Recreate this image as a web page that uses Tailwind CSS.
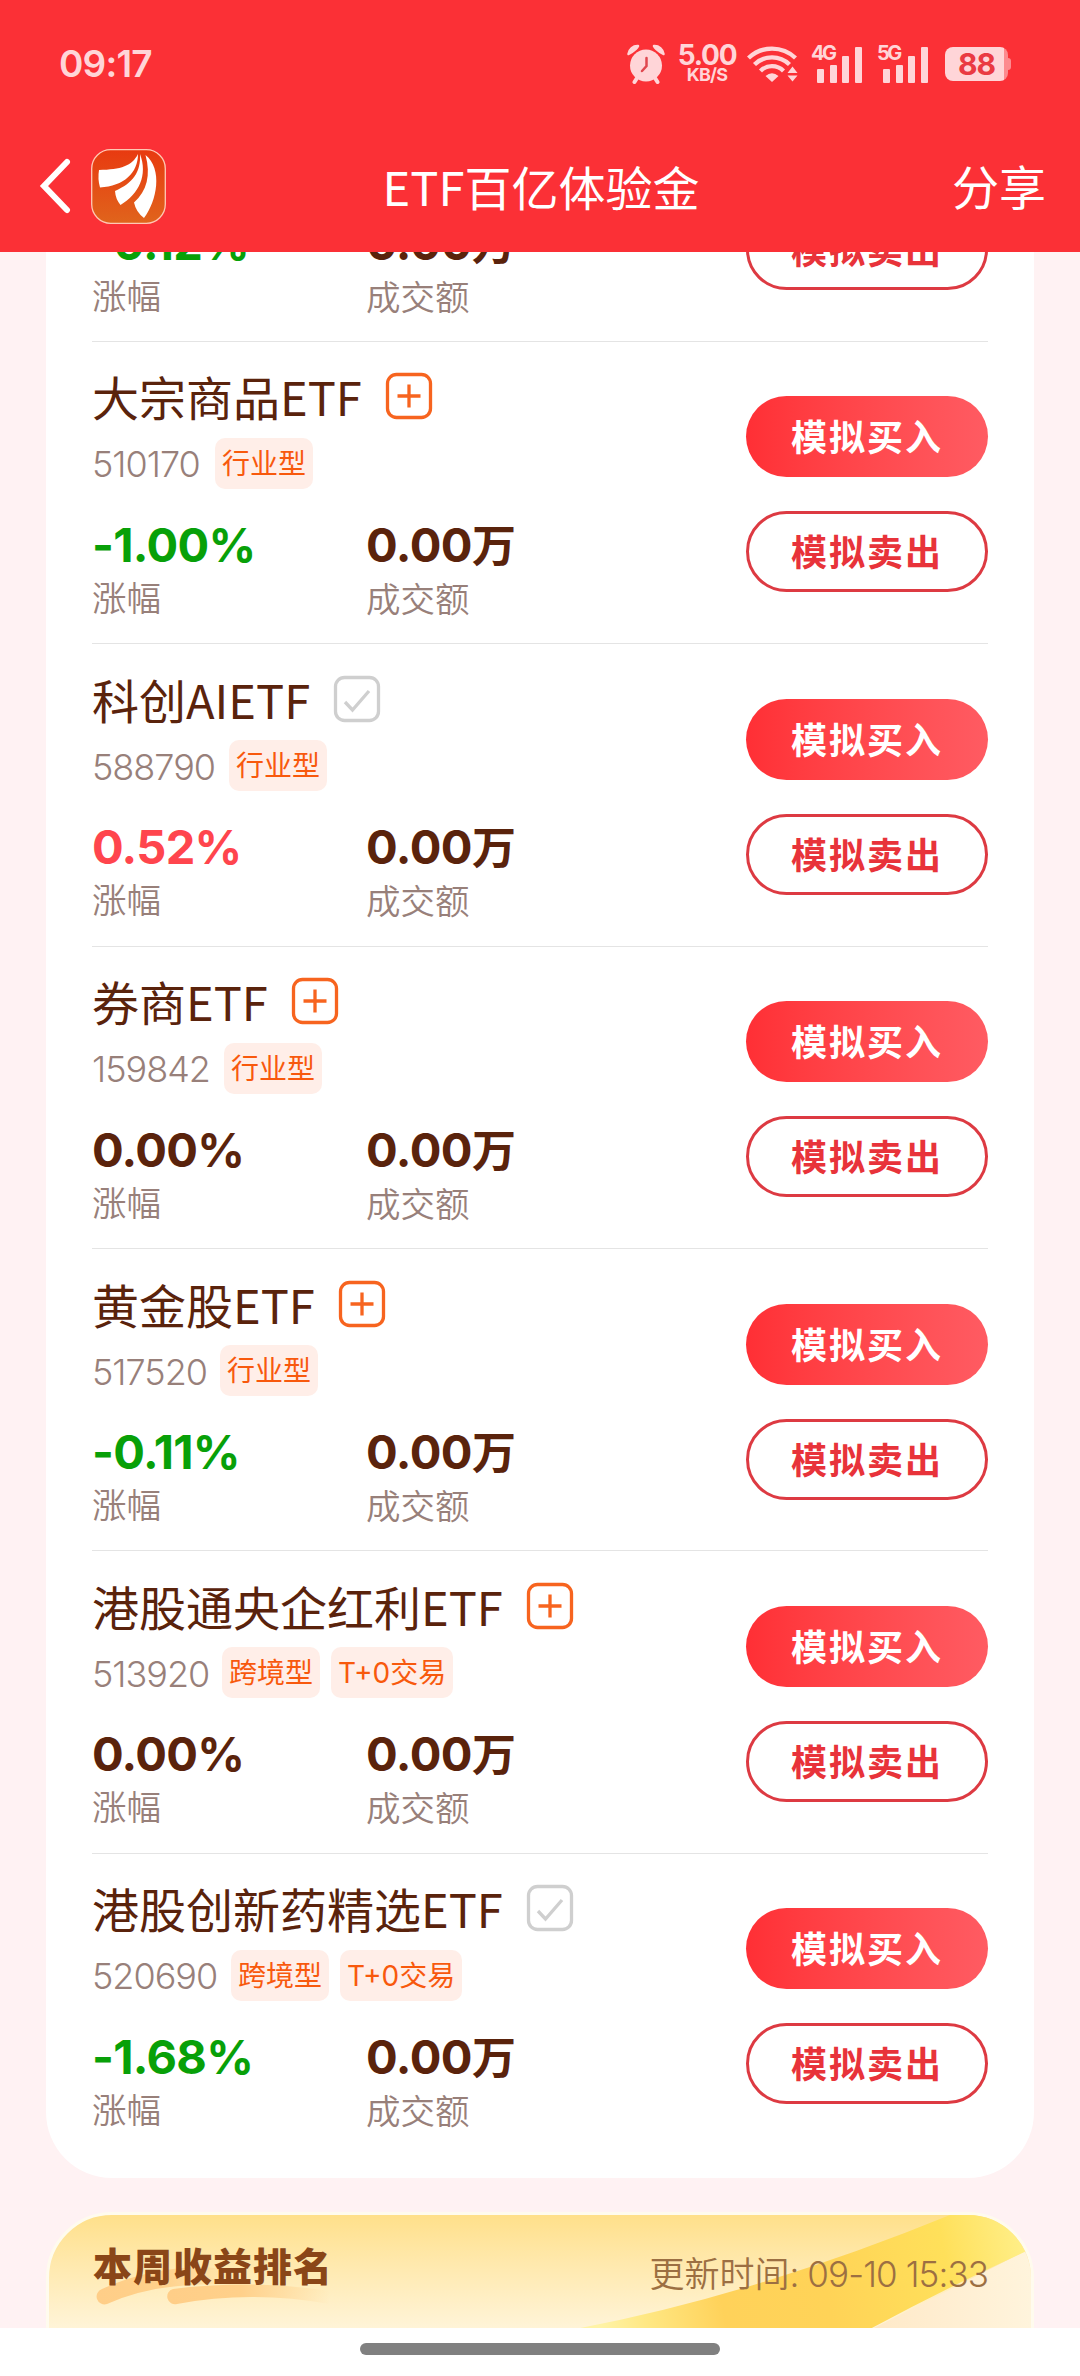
<!DOCTYPE html>
<html lang="zh-CN">
  <head>
    <meta charset="utf-8" />
    <meta name="viewport" content="width=device-width, initial-scale=1.0" />
    <script src="https://cdn.jsdelivr.net/npm/@tailwindcss/browser@4"></script>
    <title>ETF百亿体验金</title>
  </head>
  <body
    class="w-[1080px] h-[2376px] overflow-hidden bg-white font-['Inter','Noto_Sans_CJK_SC',sans-serif]"
  >
    <header class="h-[252px] bg-[#fb3036] text-white">
      <!-- status bar -->
      <div
        class="h-[128px] flex items-center justify-between pl-[59px] pr-[69px] text-[#ffd5d8]"
      >
        <span class="text-[37px] font-semibold tracking-[-0.8px]">09:17</span>
        <div class="flex items-center">
          <svg class="w-[38px] h-[40px]" viewBox="0 0 38 40">
            <g stroke="#ffd5d8" stroke-width="4" stroke-linecap="round">
              <path d="M10 34L7.500 38M28 34L30.500 38" />
            </g>
            <path
              d="M1.500 10A9 9 0 0 1 11 2Q10 5 1.500 10ZM36.500 10A9 9 0 0 0 27 2Q28 5 36.500 10Z"
              fill="#ffd5d8"
              stroke="#ffd5d8"
              stroke-width="2.500"
              stroke-linejoin="round"
            />
            <circle cx="19" cy="21.500" r="16" fill="#ffd5d8" />
            <path
              d="M19.500 14V22L15 27"
              fill="none"
              stroke="#e0474f"
              stroke-width="2.500"
              stroke-linecap="round"
            />
          </svg>
          <div class="ml-[12px] w-[60px] flex flex-col items-center font-bold">
            <span class="text-[28px] leading-[20px] tracking-[-1.2px]">5.00</span>
            <span class="mt-[2px] text-[18px] leading-[16px] tracking-[-0.8px]">KB/S</span>
          </div>
          <svg class="ml-[10px] w-[52px] h-[38px]" viewBox="0 0 52 38">
            <g fill="none" stroke="#ffd5d8" stroke-width="4.300">
              <path d="M1.500 13A34 34 0 0 1 48.500 13" />
              <path d="M7.500 19.500A25 25 0 0 1 42.500 19.500" />
              <path d="M13.500 26A16 16 0 0 1 36.500 26" />
            </g>
            <path
              d="M25 37L18.500 31Q25 25.500 31.500 31ZM40.500 28L45.500 21.500L50.500 28ZM40.500 30.500L45.500 36.500L50.500 30.500Z"
              fill="#ffd5d8"
            />
          </svg>
          <div class="relative ml-[18px] w-[46px] h-[38px] flex items-end gap-[5.500px]">
            <span class="absolute left-[-6px] top-[-1px] text-[20px] leading-[19px] font-bold tracking-[-2.5px]">4G</span>
            <i class="w-[7px] h-[14px] rounded-[1px] bg-[#ffd5d8]"></i>
            <i class="w-[7px] h-[18px] rounded-[1px] bg-[#ffd5d8]"></i>
            <i class="w-[7px] h-[27px] rounded-[1px] bg-[#ffd5d8]"></i>
            <i class="w-[7px] h-[36px] rounded-[1px] bg-[#ffd5d8]"></i>
          </div>
          <div class="relative ml-[20px] w-[46px] h-[38px] flex items-end gap-[5.500px]">
            <span class="absolute left-[-6px] top-[-1px] text-[20px] leading-[19px] font-bold tracking-[-2.5px]">5G</span>
            <i class="w-[7px] h-[14px] rounded-[1px] bg-[#ffd5d8]"></i>
            <i class="w-[7px] h-[18px] rounded-[1px] bg-[#ffd5d8]"></i>
            <i class="w-[7px] h-[27px] rounded-[1px] bg-[#ffd5d8]"></i>
            <i class="w-[7px] h-[36px] rounded-[1px] bg-[#ffd5d8]"></i>
          </div>
          <div
            class="ml-[16px] w-[63px] h-[34px] rounded-[8px] flex items-center justify-center bg-linear-to-r from-[#ffd5d8] from-94% to-[#fd8a8f] to-94% text-[30px] font-bold tracking-[-1px] text-[#ea3a42]"
          >
            88
          </div>
          <i class="w-[3px] h-[12px] rounded-r-[3px] bg-[#fd8a8f]"></i>
        </div>
      </div>
      <!-- nav bar -->
      <nav class="h-[116px] flex items-center pl-[38px] pr-[34px]">
        <svg class="w-[34px] h-[56px]" viewBox="0 0 34 56">
          <path
            d="M29 4L6 28L29 52"
            fill="none"
            stroke="#fff"
            stroke-width="6"
            stroke-linecap="round"
          />
        </svg>
        <svg class="ml-[19px] w-[75px] h-[75px]" viewBox="0 0 75 75">
          <defs>
            <linearGradient id="logo" x2="0" y2="1">
              <stop stop-color="#e83a10" />
              <stop offset="1" stop-color="#e0641c" />
            </linearGradient>
          </defs>
          <rect x=".7" y=".7" width="73.600" height="73.600" rx="19" fill="url(#logo)" stroke="#ffc9b4" stroke-width="1.300" />
          <path
            d="M47 5C41 17 30 20.500 8 21Q6.500 30 9 38.500C33 37 47 24 47 5Z
               M49 5C50 23 42 34 24 42Q24.500 50 29.500 56C48 45 57 26 49 5Z
               M54.500 6C60 26 56 42 43 53.500Q45 63 53 69C66 52 72 20 54.500 6Z"
            fill="#fff"
          />
        </svg>
        <h1 class="grow pr-[36px] text-center text-[47px] leading-[60px] font-normal font-['Noto_Sans_CJK_SC']">ETF百亿体验金</h1>
        <span class="pt-[3px] text-[47px] leading-[60px]">分享</span>
      </nav>
    </header>

    <main class="h-[2076px] overflow-hidden bg-[#fff2f3] px-[46px]">
      <section
        id="funds"
        class="-mt-[212.500px] h-[2138px] rounded-b-[66px] bg-white px-[46px]"
      ></section>

      <section
        class="relative mt-[34.500px] h-[300px] rounded-t-[66px] overflow-hidden border-[3px] border-[#fffbee] bg-linear-to-b from-[#ffe08a] to-[#fff5dc] to-[120px]"
      >
        <svg class="absolute left-0 top-0 w-[982px] h-[114px]" viewBox="49 2215 982 114">
          <defs>
            <!-- runs across the band, from its upper edge to its lower one -->
            <linearGradient id="beam" gradientUnits="userSpaceOnUse" x1="600" y1="2320" x2="1030" y2="2235">
              <stop stop-color="#fff3a6" />
              <stop offset=".1" stop-color="#ffe884" />
              <stop offset=".28" stop-color="#ffd25a" />
              <stop offset=".52" stop-color="#ffd357" />
              <stop offset=".8" stop-color="#ffe05a" />
              <stop offset="1" stop-color="#fff08c" />
            </linearGradient>
            <linearGradient id="corner" x2="1" y2="0">
              <stop stop-color="#ffe9c8" />
              <stop offset="1" stop-color="#fff4dc" />
            </linearGradient>
            <linearGradient id="swoosh" x2="1" y2="0">
              <stop stop-color="#ffce88" />
              <stop offset=".45" stop-color="#ffd08a" />
              <stop offset="1" stop-color="#ffd08a" stop-opacity="0" />
            </linearGradient>
          </defs>
          <path d="M872 2329L953 2288L1031 2248V2329Z" fill="url(#corner)" />
          <path
            d="M575 2329Q660 2313 747 2287Q850 2256 950 2215H1031V2249Q950 2286 870 2329Z"
            fill="url(#beam)"
          />
          <path d="M102 2289Q150 2267 205 2267Q235 2269 240 2285Q160 2280 107 2304A7.500 7.500 0 0 1 102 2289Z" fill="url(#swoosh)" />
          <path d="M173 2289Q250 2279 330 2291V2304Q250 2290 177 2304A7.500 7.500 0 0 1 173 2289Z" fill="url(#swoosh)" />
        </svg>
        <div class="relative flex justify-between pl-[44px] pr-[43px] pt-[22px]">
          <h2 class="text-[39px] leading-[60px] font-black tracking-[1px] text-[#8a4618]">本周收益排名</h2>
          <p class="pt-[7px] text-[35px] leading-[60px] font-[350] text-[#9c6f42]">更新时间<span class="tracking-[-0.9px]">: 09-10 15:33</span></p>
        </div>
      </section>
    </main>

    <!-- gesture bar -->
    <footer class="h-[48px] flex justify-center pt-[15px]">
      <div class="w-[360px] h-[12px] rounded-full bg-[#808080]"></div>
    </footer>

    <script>
      const green = "text-[#08a008]";
      const red = "text-[#ff454d]";
      const brown = "text-[#5a230c]";

      const funds = [
        { name: "", code: "", tags: [], rate: "-0.12%", color: green },
        { name: "大宗商品ETF", code: "510170", width: "w-[123px]", tags: ["行业型"], rate: "-1.00%", color: green },
        { name: "科创AIETF", code: "588790", width: "w-[137px]", tags: ["行业型"], rate: "0.52%", color: red, added: true },
        { name: "券商ETF", code: "159842", width: "w-[132px]", tags: ["行业型"], rate: "0.00%", color: brown },
        { name: "黄金股ETF", code: "517520", width: "w-[128px]", tags: ["行业型"], rate: "-0.11%", color: green },
        { name: "港股通央企红利ETF", code: "513920", width: "w-[130px]", tags: ["跨境型", "T+0交易"], rate: "0.00%", color: brown },
        { name: "港股创新药精选ETF", code: "520690", width: "w-[139px]", tags: ["跨境型", "T+0交易"], rate: "-1.68%", color: green, added: true },
      ];

      const plusIcon = `
        <svg class="mb-[3px] w-[48px] h-[48px]" viewBox="0 0 48 48" fill="none" stroke="#f7641f" stroke-width="3.300">
          <rect x="2.500" y="2.500" width="43" height="43" rx="9" />
          <path d="M24 12.500V35.500M12.500 24H35.500" />
        </svg>`;
      const checkIcon = `
        <svg class="mb-[3px] w-[48px] h-[48px]" viewBox="0 0 48 48" fill="none" stroke="#cfcfcf" stroke-width="3.300">
          <rect x="2.500" y="2.500" width="43" height="43" rx="9" />
          <path d="M12 27L19.500 35L36 16" />
        </svg>`;

      function tagHtml(text) {
        return `<span class="mr-[11px] h-[51px] px-[7px] pt-[2px] rounded-[10px] bg-[#ffeee8] text-[28px] leading-[49px] text-[#f8590d]">${text}</span>`;
      }

      document.getElementById("funds").innerHTML = funds
        .map(
          (item, i) => `
          <article class="h-[302.400px] flex justify-between ${i < funds.length - 1 ? "border-b border-[#e4e4e4]" : ""}">
            <div class="pt-[26px]">
              <div class="h-[60px] flex items-center">
                <h3 class="-mt-[3px] mr-[23px] text-[47px] leading-[60px] font-normal text-[#5a230c] font-['Noto_Sans_CJK_SC']">${item.name}</h3>
                ${item.name ? (item.added ? checkIcon : plusIcon) : ""}
              </div>
              <div class="mt-[10px] h-[51px] flex items-center">
                <span class="${item.width || ""} shrink-0 pt-[2px] text-[36px] font-[350] tracking-[-1px] text-[#98807a]">${item.code}</span>
                ${item.tags.map(tagHtml).join("")}
              </div>
              <div class="mt-[28px] flex">
                <div class="w-[274px]">
                  <p class="text-[47px] leading-[56px] font-bold tracking-[-0.7px] ${item.color}">${item.rate}</p>
                  <p class="text-[34.500px] leading-[52px] font-[350] text-[#98807a]">涨幅</p>
                </div>
                <div>
                  <p class="text-[47px] leading-[56px] font-bold tracking-[-0.5px] text-[#5a230c]">0.00<span class="text-[44px]">万</span></p>
                  <p class="text-[34.500px] leading-[52px] font-[350] text-[#98807a]">成交额</p>
                </div>
              </div>
            </div>
            <div class="pt-[54.500px] flex flex-col gap-[34px]">
              <button class="w-[242px] h-[81px] rounded-full bg-linear-to-r from-[#ff2f35] to-[#ff5b62] pt-[3px] text-[36px] font-bold tracking-[2px] text-white">模拟买入</button>
              <button class="w-[242px] h-[81px] rounded-full border-[3px] border-[#dd3a42] pt-[3px] text-[36px] font-bold tracking-[2px] text-[#e8333a]">模拟卖出</button>
            </div>
          </article>`
        )
        .join("");
    </script>
  </body>
</html>
